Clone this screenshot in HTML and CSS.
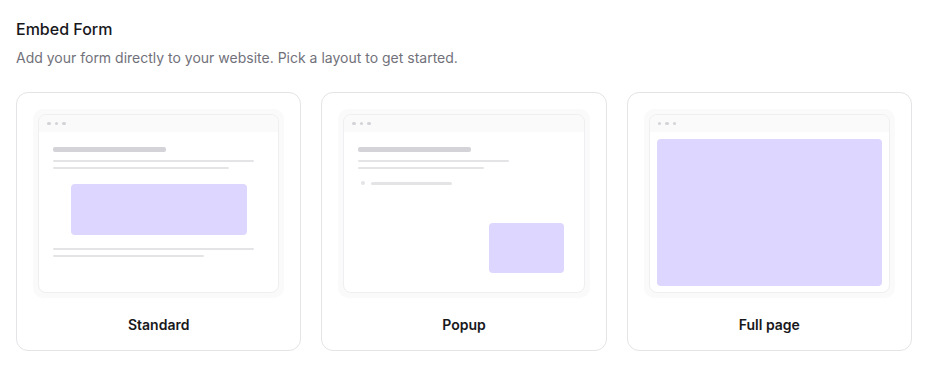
FILE: index.html
```html
<!DOCTYPE html>
<html lang="en">
<head>
    <meta charset="UTF-8">
    <meta name="viewport" content="width=device-width, initial-scale=1.0">
    <title>Embed Form</title>
    <link rel="stylesheet" href="styles.css">
</head>
<body>
    <div class="page">
        <h1 class="title">Embed Form</h1>
        <p class="subtitle">Add your form directly to your website. Pick a layout to get started.</p>

        <div class="layouts">
            <div class="card">
                <div class="preview">
                    <div class="window">
                        <div class="titlebar"><span class="dot"></span><span class="dot"></span><span class="dot"></span></div>
                        <div class="content standard">
                            <div class="bar heading"></div>
                            <div class="bar line" style="width: 201px"></div>
                            <div class="bar line short-gap" style="width: 176px"></div>
                            <div class="form-box inline-box"></div>
                            <div class="bar line" style="width: 201px"></div>
                            <div class="bar line short-gap" style="width: 151px"></div>
                        </div>
                    </div>
                </div>
                <div class="label">Standard</div>
            </div>

            <div class="card">
                <div class="preview">
                    <div class="window">
                        <div class="titlebar"><span class="dot"></span><span class="dot"></span><span class="dot"></span></div>
                        <div class="content popup">
                            <div class="bar heading"></div>
                            <div class="bar line" style="width: 151px"></div>
                            <div class="bar line short-gap" style="width: 126px"></div>
                            <div class="list-row">
                                <span class="bullet"></span>
                                <span class="bar list-line"></span>
                            </div>
                            <div class="form-box popup-box"></div>
                        </div>
                    </div>
                </div>
                <div class="label">Popup</div>
            </div>

            <div class="card">
                <div class="preview">
                    <div class="window">
                        <div class="titlebar"><span class="dot"></span><span class="dot"></span><span class="dot"></span></div>
                        <div class="content fullpage">
                            <div class="form-box full-box"></div>
                        </div>
                    </div>
                </div>
                <div class="label">Full page</div>
            </div>
        </div>
    </div>
</body>
</html>
```

FILE: styles.css
```css
* {
    box-sizing: border-box;
}
body {
    margin: 0;
    background-color: #ffffff;
    font-family: Inter, "Noto Sans", sans-serif;
    color: #18181b;
}
.page {
    padding: 17px 16px 16px 16px;
}
.title {
    margin: 0;
    font-size: 16px;
    line-height: 24px;
    font-weight: 500;
    color: #18181b;
}
.subtitle {
    margin: 7px 0 0 0;
    font-size: 14px;
    line-height: 20px;
    color: #71717a;
}
.layouts {
    display: grid;
    grid-template-columns: repeat(3, 1fr);
    gap: 20px;
    margin-top: 24px;
}
.card {
    border: 1px solid #e4e4e7;
    border-radius: 12px;
    padding: 16px 16px 0 16px;
    background-color: #ffffff;
}
.preview {
    height: 189px;
    padding: 5px;
    background-color: #fafafa;
    border-radius: 10px;
}
.window {
    height: 100%;
    display: flex;
    flex-direction: column;
    background-color: #ffffff;
    border: 1px solid #efeff1;
    border-radius: 8px;
    overflow: hidden;
}
.titlebar {
    height: 17px;
    flex-shrink: 0;
    display: flex;
    align-items: center;
    gap: 4px;
    padding-left: 8px;
    background-color: #fafafa;
}
.dot {
    width: 3.5px;
    height: 3.5px;
    border-radius: 50%;
    background-color: #d4d4d8;
}
.content {
    flex: 1;
    display: flex;
    flex-direction: column;
    padding: 15px 14px 0 14px;
}
.bar {
    display: block;
    border-radius: 2px;
}
.heading {
    width: 113px;
    height: 5px;
    background-color: #d4d4d8;
}
.line {
    height: 2px;
    margin-top: 8px;
    background-color: #e4e4e7;
}
.short-gap {
    margin-top: 5px;
}
.form-box {
    background-color: #ddd6fe;
    border-radius: 4px;
}
.inline-box {
    width: 176px;
    height: 51px;
    margin: 15px auto 5px auto;
}
.list-row {
    display: flex;
    align-items: center;
    gap: 6px;
    margin-top: 12px;
    padding-left: 3px;
}
.bullet {
    width: 4px;
    height: 4px;
    border-radius: 50%;
    background-color: #e4e4e7;
}
.list-line {
    width: 81px;
    height: 3px;
    background-color: #e4e4e7;
}
.popup-box {
    align-self: flex-end;
    width: 75px;
    height: 50px;
    margin-top: auto;
    margin-right: 6px;
    margin-bottom: 19px;
}
.fullpage {
    padding: 7px 7px 6px 7px;
}
.full-box {
    flex: 1;
}
.label {
    height: 52px;
    display: flex;
    align-items: center;
    justify-content: center;
    font-size: 14px;
    font-weight: 600;
    color: #18181b;
}
```
